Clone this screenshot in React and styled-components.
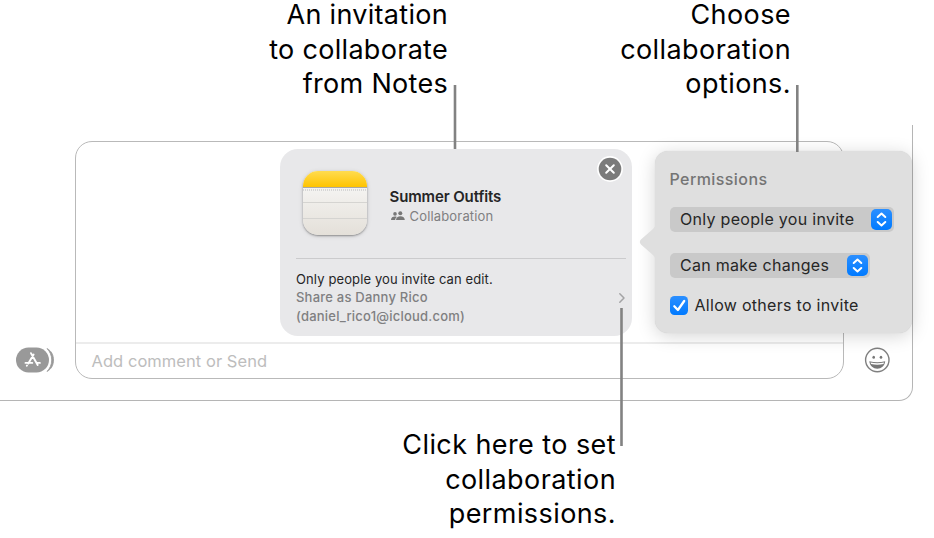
import React from 'react'
import styled, { createGlobalStyle } from 'styled-components'

const App = () => (
  <>
    <GlobalStyle />
    <Page>
      <TopCaptions>
        <Caption $width={448} $tight>
          An invitation<br />to collaborate<br />from Notes
        </Caption>
        <Caption $width={343}>
          Choose<br />collaboration<br />options.
        </Caption>
      </TopCaptions>
      <Window>
        <SideColumn $width={75} $left={16}>
          <AppsIcon />
        </SideColumn>
        <Field>
          <Attachment>
            <InviteCard />
          </Attachment>
          <Input>Add comment or Send</Input>
        </Field>
        <SideColumn $width={68} $left={20}>
          <SmileIcon />
        </SideColumn>
        <PermissionsPopover />
      </Window>
      <BottomCaption $width={616}>
        Click here to set<br />collaboration<br />permissions.
      </BottomCaption>
      <Pointers width="934" height="538" viewBox="0 0 934 538">
        <path d="M455 85V149M797.300 85V152M621.500 308V446" stroke="#828282" strokeWidth="2.600" />
      </Pointers>
    </Page>
  </>
)

const InviteCard = () => (
  <Card>
    <CloseButton>
      <svg width="28" height="28" viewBox="0 0 28 28">
        <circle cx="14" cy="14" r="12.900" fill="#fff" />
        <circle cx="14" cy="14" r="11.300" fill="#7b7b7b" />
        <path d="M10.200 10.200l7.600 7.600M17.800 10.200l-7.600 7.600" stroke="#fff" strokeWidth="2" strokeLinecap="round" />
      </svg>
    </CloseButton>
    <CardHeader>
      <NotesIcon />
      <CardText>
        <Title>Summer Outfits</Title>
        <Kind>
          <PeopleIcon />
          Collaboration
        </Kind>
      </CardText>
    </CardHeader>
    <CardFooter>
      <CardText>
        <Access>Only people you invite can edit.</Access>
        <ShareAs>Share as Danny Rico</ShareAs>
        <ShareAs>(daniel_rico1@icloud.com)</ShareAs>
      </CardText>
      <svg width="8" height="12" viewBox="0 0 8 12" fill="none">
        <path d="M1.800 1.800L6 6L1.800 10.200" stroke="#a3a3a5" strokeWidth="1.500" strokeLinecap="round" strokeLinejoin="round" />
      </svg>
    </CardFooter>
  </Card>
)

const PermissionsPopover = () => (
  <Popover>
    <Arrow width="17" height="40" viewBox="0 0 17 40">
      <path d="M17 2C16 5 14.500 6.500 12 8.700L2.200 17.300Q-.6 20 2.200 22.700L12 31.300C14.500 33.500 16 35 17 38Z" fill="#dfdfdf" />
    </Arrow>
    <PopoverTitle>Permissions</PopoverTitle>
    <Options>
      <Select $width={224.5}>
        <Value>Only people you invite</Value>
        <Stepper />
      </Select>
      <Select $width={200.5}>
        <Value>Can make changes</Value>
        <Stepper />
      </Select>
      <CheckRow>
        <Checkbox>
          <svg width="19" height="19" viewBox="0 0 19 19" fill="none">
            <path d="M4.300 10.300L7.900 14L14.200 5" stroke="#fff" strokeWidth="2.300" strokeLinecap="round" strokeLinejoin="round" />
          </svg>
        </Checkbox>
        <Value>Allow others to invite</Value>
      </CheckRow>
    </Options>
  </Popover>
)

const Stepper = () => (
  <StepperBox>
    <svg width="21" height="21" viewBox="0 0 21 21" fill="none">
      <path d="M6.700 8L10.500 4.500L14.300 8M6.700 13L10.500 16.500L14.300 13" stroke="#fff" strokeWidth="2" strokeLinecap="round" strokeLinejoin="round" />
    </svg>
  </StepperBox>
)

const NotesIcon = () => (
  <NotesTile>
    <NotesBand />
    <NotesStub />
    <NotesRule />
    <NotesRule />
  </NotesTile>
)

const PeopleIcon = () => (
  <svg width="14" height="10" viewBox="0 0 14 10" fill="#777">
    <circle cx="4" cy="2.900" r="1.800" />
    <circle cx="9.300" cy="2.300" r="2" />
    <path d="M0 8.900C0 6.700 1.700 5.500 4 5.500C4.700 5.500 5.300 5.600 5.800 5.900C4.800 6.700 4.200 7.700 4.200 8.900Z" />
    <path d="M5 8.900C5 6.600 6.900 5.200 9.400 5.200S13.800 6.600 13.800 8.900Z" />
  </svg>
)

const AppsIcon = () => (
  <svg width="40" height="26" viewBox="0 0 40 26" fill="none">
    <rect x="0" y="0.500" width="33" height="25" rx="12.500" fill="#999" />
    <path d="M31 1.500C35.500 4 37.500 8 37.500 13S35.500 22 31 24.500C34 21.500 35.700 17.500 35.700 13S34 4.500 31 1.500Z" fill="#999" stroke="#999" strokeWidth="0.800" />
    <path
      d="M17.600 7.600L12.300 16.400M15 6.200L21.700 18M9.500 15.900H16.300M20.600 15.900H23.900M11 18.500L10.800 18.800"
      stroke="#fff"
      strokeWidth="1.900"
      strokeLinecap="round"
    />
  </svg>
)

const SmileIcon = () => (
  <svg width="26" height="26" viewBox="0 0 26 26" fill="none">
    <circle cx="13.300" cy="13" r="11.700" stroke="#7f7f7f" strokeWidth="1.400" />
    <ellipse cx="9.700" cy="10.300" rx="1.300" ry="1.500" fill="#777" />
    <ellipse cx="17" cy="10.300" rx="1.300" ry="1.500" fill="#777" />
    <path d="M5.300 14.300Q13.300 16.300 21.200 14.300C20.600 19 17.300 21.700 13.300 21.700S5.900 19 5.300 14.300Z" fill="#777" />
    <path d="M6.500 15.500Q13.300 17.100 20 15.500L19.500 17Q13.300 18.600 7 17Z" fill="#fff" />
  </svg>
)

const GlobalStyle = createGlobalStyle`
  body {
    margin: 0;
    background: #fff;
    font-family: Inter, "Liberation Sans", sans-serif;
  }

  svg {
    display: block;
    flex: none;
  }
`

const Page = styled.div`
  position: relative;
  display: flex;
  flex-direction: column;
  width: 934px;
  height: 538px;
`

const TopCaptions = styled.div`
  display: flex;
  align-items: flex-end;
  flex: none;
  box-sizing: border-box;
  height: 125px;
  padding-bottom: 23px;
`

const Caption = styled.div`
  width: ${({ $width }) => $width}px;
  color: #000;
  font-size: 27px;
  line-height: 34.700px;
  letter-spacing: ${({ $tight }) => ($tight ? 0.3 : 0.42)}px;
  text-align: right;
  white-space: nowrap;
`

const BottomCaption = styled(Caption)`
  padding-top: 27px;
`

const Pointers = styled.svg`
  position: absolute;
  inset: 0;
  pointer-events: none;
`

const Window = styled.div`
  position: relative;
  display: flex;
  flex: none;
  box-sizing: border-box;
  width: 913px;
  height: 276px;
  padding-top: 16px;
  border: solid #b5b5b5;
  border-width: 0 1px 1px 0;
  border-radius: 0 0 14px 0;
`

const SideColumn = styled.div`
  box-sizing: border-box;
  flex: none;
  width: ${({ $width }) => $width}px;
  padding: 206px 0 0 ${({ $left }) => $left}px;
`

const Field = styled.div`
  display: flex;
  flex-direction: column;
  box-sizing: border-box;
  flex: none;
  width: 769px;
  height: 238px;
  border: 1px solid #b9b9b9;
  border-radius: 17px;
`

const Attachment = styled.div`
  flex: 1;
  padding: 7px 0 0 204px;
`

const Input = styled.div`
  height: 34px;
  padding-left: 15.500px;
  border-top: 2px solid #ececec;
  color: #bdbdbd;
  font-size: 16.500px;
  line-height: 34px;
  letter-spacing: 0.050px;
`

const Card = styled.div`
  position: relative;
  box-sizing: border-box;
  width: 351.500px;
  height: 187px;
  padding: 0 6px 0 16px;
  border-radius: 18px;
  background: #e8e8ea;
`

const CloseButton = styled.div`
  position: absolute;
  top: 6px;
  right: 8px;
`

const CardHeader = styled.div`
  display: flex;
  box-sizing: border-box;
  height: 110px;
  gap: 22.500px;
  padding: 22px 0 0 7px;
  border-bottom: 1px solid #cbcbcd;
`

const CardText = styled.div`
  display: flex;
  flex-direction: column;
`

const NotesTile = styled.div`
  display: flex;
  flex-direction: column;
  flex: none;
  width: 64px;
  height: 64px;
  border-radius: 15px;
  overflow: hidden;
  background: linear-gradient(#fafafa, #e4e0d9);
  box-shadow: 0 1px 2px rgba(0, 0, 0, 0.35), 0 1px 5px rgba(0, 0, 0, 0.12);
`

const NotesBand = styled.div`
  height: 16px;
  border-bottom: 1px solid #aaa9a5;
  background: linear-gradient(#ffdc50, #ffc400);
`

const NotesStub = styled.div`
  height: 2px;
  margin-top: 1px;
  margin-bottom: 11px;
  background: repeating-linear-gradient(90deg, #d6d6d6 0 1px, transparent 1px 2px);
`

const NotesRule = styled.div`
  height: 15px;
  border-top: 1px solid #d5d4d1;
`

const Title = styled.div`
  margin-top: 16px;
  color: #252526;
  font-size: 15px;
  font-weight: 600;
  line-height: 20px;
  letter-spacing: -0.120px;
`

const Kind = styled.div`
  display: flex;
  align-items: center;
  gap: 5px;
  padding-left: 1px;
  color: #7f7f81;
  font-size: 13px;
  line-height: 18px;
  letter-spacing: 0.170px;
`

const CardFooter = styled.div`
  display: flex;
  justify-content: space-between;
  align-items: center;
  padding-top: 11px;
`

const Access = styled.div`
  color: #252526;
  font-size: 13px;
  line-height: 18px;
  letter-spacing: 0.120px;
`

const ShareAs = styled.div`
  color: #7f7f81;
  font-size: 13px;
  font-weight: 500;
  line-height: 18.500px;
  letter-spacing: 0.220px;
`

const Popover = styled.div`
  position: absolute;
  top: 26px;
  left: 654.500px;
  box-sizing: border-box;
  width: 257px;
  height: 182px;
  padding: 18px 0 0 15px;
  border-radius: 13px;
  background: #dfdfdf;
  box-shadow: 0 3px 18px rgba(0, 0, 0, 0.17), 0 0 1px rgba(0, 0, 0, 0.15);
`

const Arrow = styled.svg`
  position: absolute;
  top: 71px;
  left: -16px;
`

const PopoverTitle = styled.div`
  height: 38px;
  color: #747474;
  font-size: 16px;
  font-weight: 500;
  line-height: 20px;
  letter-spacing: 0.420px;
`

const Options = styled.div`
  display: flex;
  flex-direction: column;
  gap: 21px;
`

const Select = styled.div`
  display: flex;
  justify-content: space-between;
  align-items: center;
  box-sizing: border-box;
  width: ${({ $width }) => $width}px;
  height: 25px;
  padding: 0 2px 0 10.500px;
  border-radius: 5px;
  background: #c9c9c9;
`

const Value = styled.span`
  padding-bottom: 1.500px;
  color: #262626;
  font-size: 16px;
  line-height: 20px;
  letter-spacing: 0.290px;
  white-space: nowrap;
`

const StepperBox = styled.div`
  width: 21px;
  height: 21px;
  border-radius: 5px;
  background: linear-gradient(#2b8fff, #007aff);
`

const CheckRow = styled.div`
  display: flex;
  align-items: center;
  gap: 6.500px;
  margin-top: -4px;
`

const Checkbox = styled.div`
  width: 18.500px;
  height: 19px;
  border-radius: 4.500px;
  background: linear-gradient(#2b8fff, #007aff);
`

export default App
